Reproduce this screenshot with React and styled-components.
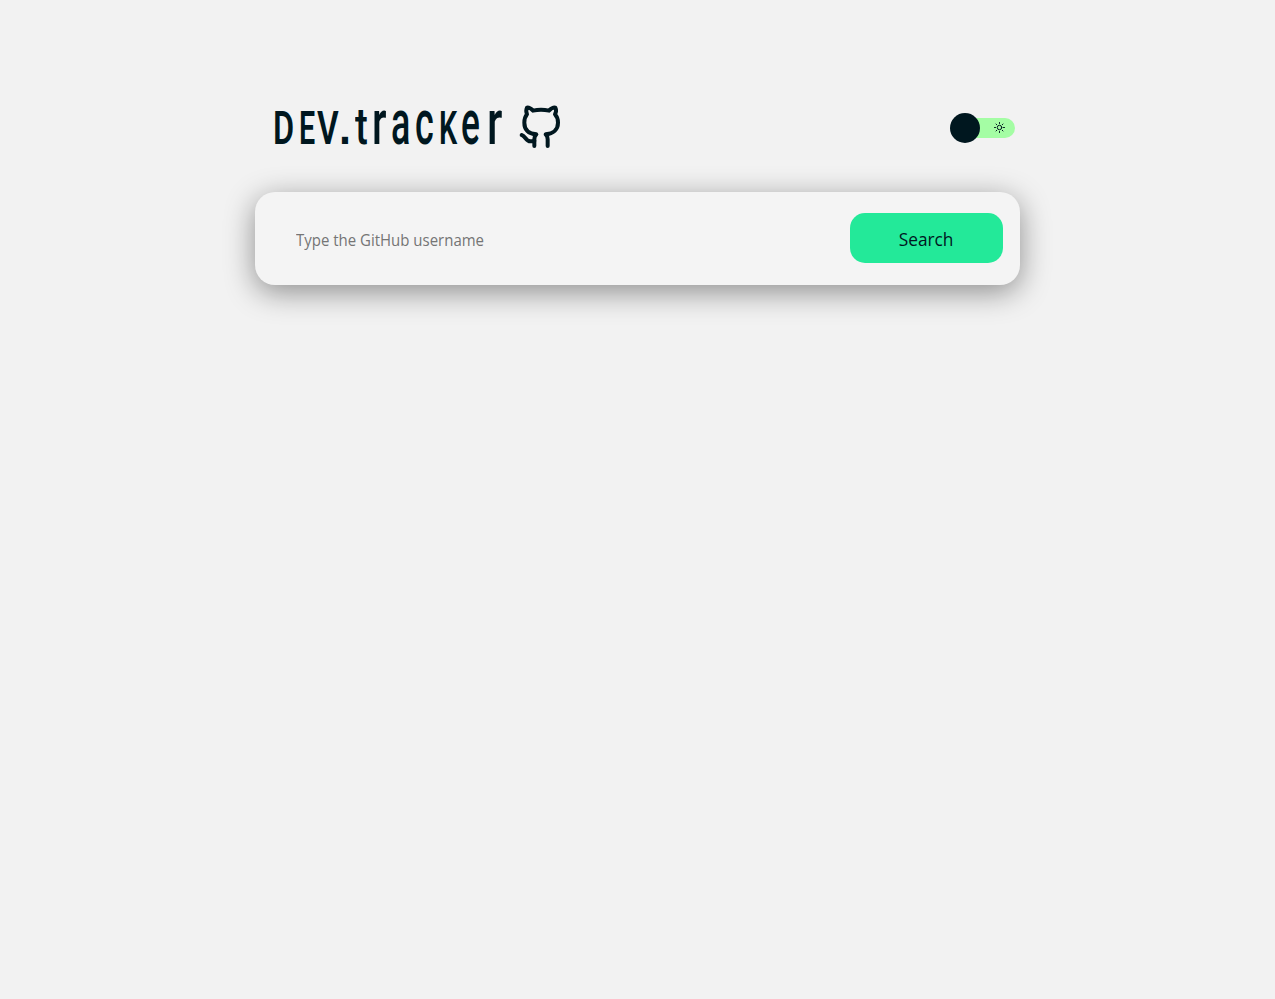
import React from "react";
import styled, { createGlobalStyle } from "styled-components";

const ink = "#00171f";

const GlobalStyle = createGlobalStyle`
  * { box-sizing: border-box; }
  body {
    margin: 0;
    background: #f2f2f2;
    color: ${ink};
    font-family: "Open Sans", "Noto Sans", sans-serif;
  }
`;

const Page = styled.main`
  width: 765px;
  min-height: 999px;
  margin: 0 auto;
  padding-top: 100px;
`;

const Header = styled.header`
  display: flex;
  align-items: center;
  justify-content: space-between;
  height: 56px;
  padding: 0 5px 0 18px;
  margin-bottom: 36px;
`;

const Brand = styled.div`
  display: flex;
  align-items: flex-start;
  height: 56px;
`;

const Wordmark = styled.h1`
  display: flex;
  align-items: baseline;
  width: 242px;
  height: 56px;
  margin: -5px 0 0;
  font-family: Roboto, sans-serif;
  line-height: 56px;
`;

const Letter = styled.span`
  display: inline-block;
  flex: none;
  width: ${(p) => p.$width}px;
  font-family: ${(p) => (p.$square ? '"Liberation Sans", sans-serif' : "inherit")};
  font-weight: ${(p) => (p.$size < 50 ? 600 : 500)};
  font-size: ${(p) => p.$size}px;
  line-height: 56px;
  text-transform: ${(p) => (p.$caps ? "uppercase" : "none")};
  white-space: nowrap;
  transform: scaleX(${(p) => p.$stretch});
  transform-origin: left;
`;

const Toggle = styled.button`
  display: flex;
  align-items: center;
  width: 65px;
  height: 30px;
  padding: 0;
  border: 0;
  background: none;
`;

const Knob = styled.span`
  z-index: 1;
  flex: none;
  width: 30px;
  height: 30px;
  border-radius: 50%;
  background: ${ink};
`;

const Track = styled.span`
  display: flex;
  align-items: center;
  justify-content: flex-end;
  flex: none;
  width: 50px;
  height: 20px;
  margin-left: -15px;
  padding: 0 10px 1px 0;
  border-radius: 10px;
  background: #a4fda4;
`;

const SearchBar = styled.form`
  display: flex;
  align-items: center;
  justify-content: space-between;
  height: 93px;
  padding: 0 17px 1px 41px;
  border-radius: 20px;
  background: #f4f4f4;
  box-shadow: 0 7px 30px rgba(0, 0, 0, 0.42);
`;

const Field = styled.input`
  width: 540px;
  height: 50px;
  padding: 3px 0 0;
  border: 0;
  outline: 0;
  background: transparent;
  font-family: inherit;
  font-size: 16.5px;
  transform: scaleX(0.908);
  transform-origin: left;
  &::placeholder { color: #757575; }
`;

const SearchButton = styled.button`
  width: 153px;
  height: 50px;
  padding: 1px 0 0;
  border: 0;
  border-radius: 15px;
  background: #23e999;
  color: ${ink};
  font-family: inherit;
  font-size: 19px;
`;

const ButtonLabel = styled.span`
  display: inline-block;
  transform: scaleX(0.91);
`;

const letters = [
  { char: "D", width: 26, size: 47, stretch: 0.69 },
  { char: "E", width: 18, size: 47, stretch: 0.61 },
  { char: "V", width: 22, size: 47, stretch: 0.71 },
  { char: ".", width: 16, size: 49, stretch: 0.88, square: true },
  { char: "t", width: 17, size: 52, stretch: 0.74 },
  { char: "r", width: 18.5, size: 63, stretch: 0.65 },
  { char: "a", width: 24.5, size: 63, stretch: 0.57 },
  { char: "c", width: 24, size: 63, stretch: 0.57 },
  { char: "k", width: 22, size: 47, stretch: 0.61, caps: true },
  { char: "e", width: 25.5, size: 63, stretch: 0.56 },
  { char: "r", width: 18, size: 63, stretch: 0.69 },
];

function GithubIcon() {
  return (
    <svg width="50" height="54" viewBox="0 0 150 162" fill="none" stroke={ink} strokeWidth="12" strokeLinecap="round" strokeLinejoin="round">
      <path d="M58 138V118C58 112 59 108 64 103C42 101 28 90 28 68C28 58 31 49 36 43C33 35 33 29 36 23C42 22 48 26 54 32C68 29 88 29 102 32C108 26 115 22 121 23C124 29 124 36 120 43C126 49 129 58 129 68C129 88 115 101 92 103C97 108 98 112 98 118V138" />
      <path d="M20 105C31 107 32 124 46 124C51 124 54 124 58 122" />
    </svg>
  );
}

function SunIcon() {
  return (
    <svg width="11" height="11" viewBox="0 0 22 22" fill="none" stroke={ink} strokeWidth="2" strokeLinecap="round">
      <circle cx="11" cy="11" r="4.5" />
      <path d="M11 1v2M11 19v2M1 11h2M19 11h2M4 4l1.4 1.4M16.6 16.6L18 18M18 4l-1.4 1.4M5.4 16.6L4 18" />
    </svg>
  );
}

export default function App() {
  return (
    <>
      <GlobalStyle />
      <Page>
        <Header>
          <Brand>
            <Wordmark>
              {letters.map((l, i) => (
                <Letter key={i} $width={l.width} $size={l.size} $stretch={l.stretch} $caps={l.caps} $square={l.square}>
                  {l.char}
                </Letter>
              ))}
            </Wordmark>
            <GithubIcon />
          </Brand>
          <Toggle type="button" aria-label="Theme">
            <Knob />
            <Track><SunIcon /></Track>
          </Toggle>
        </Header>
        <SearchBar onSubmit={(e) => e.preventDefault()}>
          <Field placeholder="Type the GitHub username" />
          <SearchButton><ButtonLabel>Search</ButtonLabel></SearchButton>
        </SearchBar>
      </Page>
    </>
  );
}
